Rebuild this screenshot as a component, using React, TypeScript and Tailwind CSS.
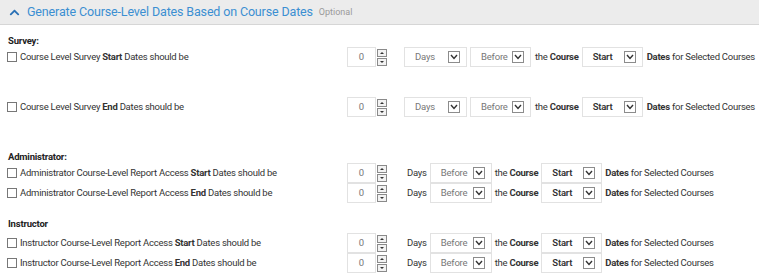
import { FaChevronUp } from "react-icons/fa";

const font = { fontFamily: 'Roboto, "Open Sans", sans-serif' };

const txt = "text-[9.5px] tracking-[-0.25px] text-[#333]";

function Spinner() {
  return (
    <div className="flex items-center h-[20px] shrink-0">
      <div className="w-[29px] h-[20px] border border-[#e2e2e2] bg-white flex items-center justify-center text-[9.5px] text-[#777]">
        0
      </div>
      <div className="flex flex-col gap-[1px] ml-[1px]">
        <span className="w-[10px] h-[8px] border border-[#8a8a8a] bg-[#f2f2f2] flex items-center justify-center">
          <svg width="4" height="2" viewBox="0 0 4 2">
            <polygon points="0,2 2,0 4,2" fill="#333" />
          </svg>
        </span>
        <span className="w-[10px] h-[8px] border border-[#8a8a8a] bg-[#f2f2f2] flex items-center justify-center">
          <svg width="4" height="2" viewBox="0 0 4 2">
            <polygon points="0,0 4,0 2,2" fill="#333" />
          </svg>
        </span>
      </div>
    </div>
  );
}

function Select({ label, width, bold }: { label: string; width: string; bold?: boolean }) {
  return (
    <div
      className={`${width} h-[20px] shrink-0 border border-[#e2e2e2] bg-white flex items-center justify-between pl-[10px] pr-[6px]`}
    >
      <span
        className={
          bold
            ? "text-[9.5px] tracking-[-0.2px] font-semibold text-[#333]"
            : "text-[9.5px] tracking-[-0.2px] text-[#777]"
        }
      >
        {label}
      </span>
      <span className="w-[12px] h-[12px] border border-[#8c8c8c] bg-white flex items-center justify-center">
        <svg width="8" height="6" viewBox="0 0 8 6">
          <polyline points="1,1 4,4.5 7,1" fill="none" stroke="#333" strokeWidth="1.4" />
        </svg>
      </span>
    </div>
  );
}

function Label({ pre, strong }: { pre: string; strong: string }) {
  return (
    <div className={`w-[347px] shrink-0 flex items-center pl-[7px] whitespace-nowrap ${txt}`}>
      <span className="w-[10px] h-[10px] border border-[#777] mr-[3px] shrink-0" />
      <span>
        {pre} <b className="font-bold">{strong}</b> Dates should be
      </span>
    </div>
  );
}

function SurveyRow({ pre, strong }: { pre: string; strong: string }) {
  return (
    <div className="flex items-center h-[20px] whitespace-nowrap">
      <Label pre={pre} strong={strong} />
      <Spinner />
      <div className="ml-[17px] shrink-0">
        <Select label="Days" width="w-[63px]" />
      </div>
      <div className="ml-[3px] shrink-0">
        <Select label="Before" width="w-[61px]" />
      </div>
      <span className={`ml-[4px] shrink-0 ${txt}`}>
        the <b>Course</b>
      </span>
      <div className="ml-[3px] shrink-0">
        <Select label="Start" width="w-[61px]" bold />
      </div>
      <span className={`ml-[4px] shrink-0 ${txt}`}>
        <b>Dates</b> for Selected Courses
      </span>
    </div>
  );
}

function ReportRow({ pre, strong }: { pre: string; strong: string }) {
  return (
    <div className="flex items-center h-[20px] whitespace-nowrap">
      <Label pre={pre} strong={strong} />
      <Spinner />
      <span className={`ml-[20px] shrink-0 ${txt}`}>Days</span>
      <div className="ml-[3px] shrink-0">
        <Select label="Before" width="w-[62px]" />
      </div>
      <span className={`ml-[3px] shrink-0 ${txt}`}>
        the <b>Course</b>
      </span>
      <div className="ml-[3px] shrink-0">
        <Select label="Start" width="w-[61px]" bold />
      </div>
      <span className={`ml-[3px] shrink-0 ${txt}`}>
        <b>Dates</b> for Selected Courses
      </span>
    </div>
  );
}

function Heading({ children, className }: { children: string; className: string }) {
  return (
    <div className={`${className} pl-[8px] text-[9.5px] tracking-[-0.2px] font-bold text-[#222] leading-[12px]`}>
      {children}
    </div>
  );
}

export default function App() {
  return (
    <div className="w-[759px] h-[276px] bg-white overflow-hidden" style={font}>
      <div className="h-[25px] bg-[#ececec] border-b border-[#d6d6d6] flex items-center pl-[9px] whitespace-nowrap">
        <FaChevronUp className="text-[#2a70b5] w-[11px] h-[11px]" />
        <span className="ml-[7px] text-[12.5px] tracking-[-0.15px] text-[#3b8fd2] leading-none">
          Generate Course-Level Dates Based on Course Dates
        </span>
        <span className="ml-[6px] text-[9px] text-[#9a9a9a] mt-[2px]">Optional</span>
      </div>

      <Heading className="mt-[10px]">Survey:</Heading>
      <SurveyRow pre="Course Level Survey" strong="Start" />
      <div className="mt-[30px]">
        <SurveyRow pre="Course Level Survey" strong="End" />
      </div>

      <Heading className="mt-[34px]">Administrator:</Heading>
      <ReportRow pre="Administrator Course-Level Report Access" strong="Start" />
      <ReportRow pre="Administrator Course-Level Report Access" strong="End" />

      <Heading className="mt-[15px]">Instructor</Heading>
      <div className="mt-[3px]">
        <ReportRow pre="Instructor Course-Level Report Access" strong="Start" />
        <ReportRow pre="Instructor Course-Level Report Access" strong="End" />
      </div>
    </div>
  );
}
